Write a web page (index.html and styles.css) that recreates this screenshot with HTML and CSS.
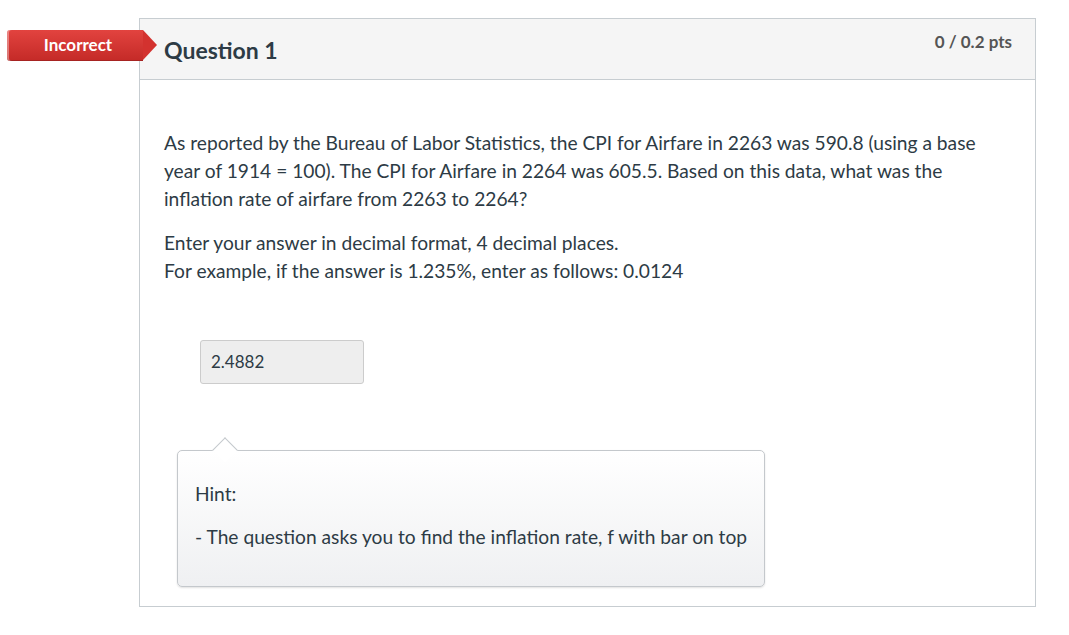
FILE: index.html
```html
<!DOCTYPE html>
<html>
<head>
<meta charset="utf-8">
<link rel="stylesheet" href="styles.css">
</head>
<body>
<div class="page">
  <div class="badge">Incorrect</div>
  <div class="question">
    <div class="qheader">
      <div class="qtitle">Question 1</div>
      <div class="qpts">0 / 0.2 pts</div>
    </div>
    <div class="qbody">
      <p>As reported by the Bureau of Labor Statistics, the CPI for Airfare in 2263 was 590.8 (using a base year of 1914 = 100). The CPI for Airfare in 2264 was 605.5. Based on this data, what was the inflation rate of airfare from 2263 to 2264?</p>
      <p>Enter your answer in decimal format, 4 decimal places.<br>For example, if the answer is 1.235%, enter as follows: 0.0124</p>
      <div class="answer">2.4882</div>
      <div class="hint">
        <p>Hint:</p>
        <p class="nowrap">- The question asks you to find the inflation rate, f with bar on top</p>
      </div>
    </div>
  </div>
</div>
</body>
</html>
```

FILE: styles.css
```css
html, body {
  margin: 0;
  padding: 0;
  background: #fff;
}
body {
  font-family: Lato, "Open Sans", sans-serif;
  color: #2d3b45;
}
.page {
  position: relative;
  padding: 18px 0 0 139px;
  width: 897px;
}
.question {
  border: 1px solid #c7cdd1;
  width: 895px;
}
.qheader {
  background: #f5f5f5;
  border-bottom: 1px solid #c7cdd1;
  height: 60px;
  display: flex;
  justify-content: space-between;
  padding: 0 23px 0 24px;
}
.qtitle {
  font-size: 23px;
  font-weight: bold;
  margin-top: 17px;
}
.qpts {
  font-size: 17px;
  font-weight: bold;
  color: #555;
  margin-top: 12px;
}
.badge {
  position: absolute;
  left: 7px;
  top: 30px;
  width: 136px;
  height: 31px;
  background: linear-gradient(#e2433f, #c42a27);
  border-radius: 3px 0 0 3px;
  box-shadow: inset 2px 0 0 rgba(255,255,255,0.35), inset 0 -1px 0 rgba(0,0,0,0.15);
  color: #fff;
  font-weight: bold;
  font-size: 17px;
  line-height: 30px;
  text-align: center;
  box-sizing: border-box;
  padding-left: 6px;
}
.badge::after {
  content: "";
  position: absolute;
  right: -14px;
  top: 0;
  border-left: 14px solid #d3322f;
  border-top: 15.5px solid transparent;
  border-bottom: 15.5px solid transparent;
}
.qbody {
  padding: 49px 24px 19px 24px;
  font-size: 19.2px;
  line-height: 28px;
}
.qbody > p {
  margin: 0 0 16px 0;
}
.answer {
  margin: 55px 0 0 36px;
  width: 164px;
  height: 44px;
  box-sizing: border-box;
  background: #eeeeee;
  border: 1px solid #cccccc;
  border-radius: 3px;
  font-size: 17px;
  line-height: 42px;
  padding-left: 10px;
}
.hint {
  position: relative;
  margin: 66px 0 0 13px;
  width: 588px;
  box-sizing: border-box;
  border: 1px solid #c4c8cc;
  border-radius: 5px;
  background: linear-gradient(#ffffff, #eff0f2);
  box-shadow: 0 1px 2px rgba(0,0,0,0.12);
  padding: 29px 10px 20px 17px;
}
.hint p {
  margin: 0 0 15px 0;
}
.hint .nowrap {
  white-space: nowrap;
}
.hint::before {
  content: "";
  position: absolute;
  left: 38px;
  top: -10px;
  width: 17px;
  height: 17px;
  background: #fff;
  border-top: 1px solid #c4c8cc;
  border-left: 1px solid #c4c8cc;
  transform: rotate(45deg);
  transform-origin: center;
}
```
